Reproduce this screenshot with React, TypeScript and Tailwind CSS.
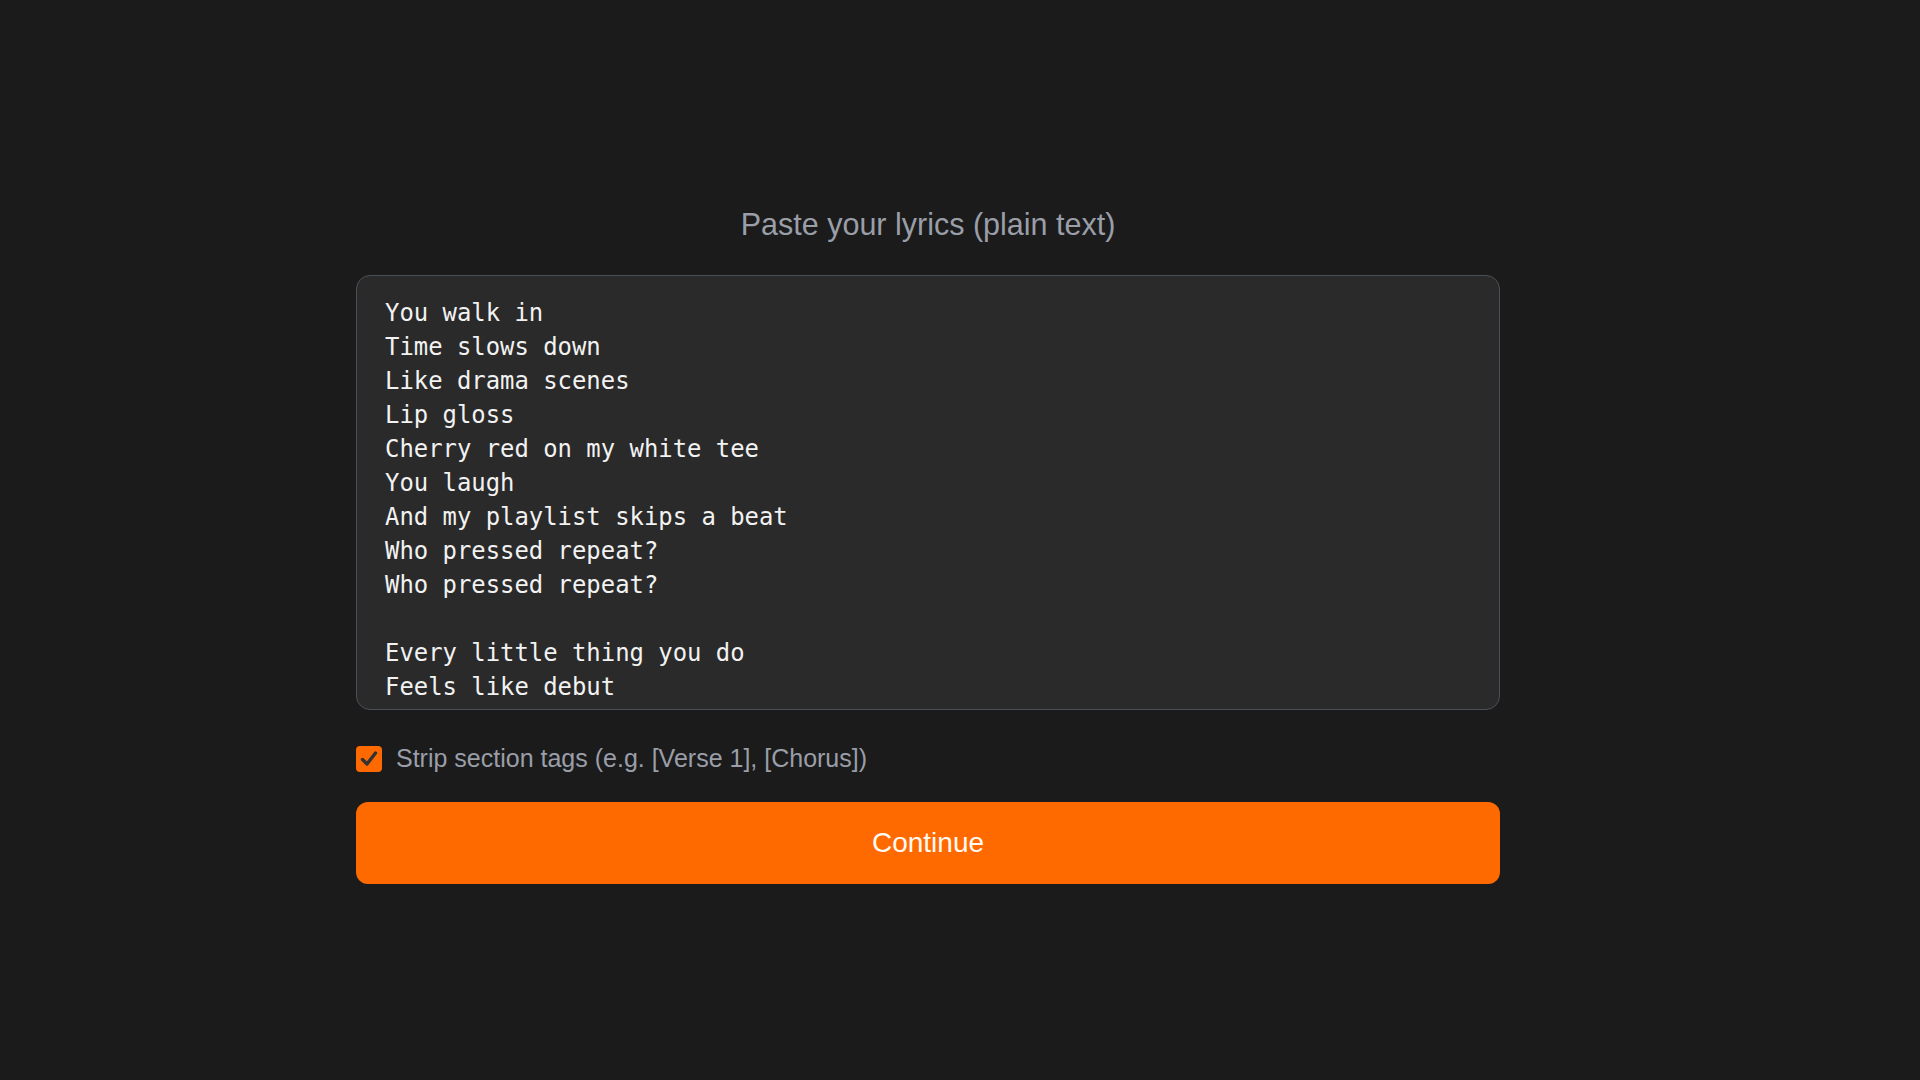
import { useState } from "react";

const lyrics = `You walk in
Time slows down
Like drama scenes
Lip gloss
Cherry red on my white tee
You laugh
And my playlist skips a beat
Who pressed repeat?
Who pressed repeat?

Every little thing you do
Feels like debut
Every time you look at me
It's a brand new scene`;

const App = () => {
    const [text, setText] = useState(lyrics);
    const [strip, setStrip] = useState(true);

    return (
        <div className="min-h-screen w-full bg-[#1b1b1b] pl-[356px] pt-[206px]" style={{ fontFamily: '"Liberation Sans", Arial, sans-serif' }}>
            <div className="flex w-[1144px] flex-col">
                <h1 className="text-center text-[30.5px] leading-[36px] text-[#9a9ea8]">Paste your lyrics (plain text)</h1>

                <textarea
                    value={text}
                    onChange={(e) => setText(e.target.value)}
                    spellCheck={false}
                    className="mt-[33px] h-[435px] w-full resize-none overflow-hidden rounded-[14px] border border-[#4a505a] bg-[#2a2a2a] px-[28px] pt-[20px] text-[23.9px] leading-[34px] text-[#f2f2f2] outline-none"
                    style={{ fontFamily: '"DejaVu Sans Mono", "Liberation Mono", monospace' }}
                />

                {/* strip tags toggle */}
                <label className="mt-[35px] flex h-[28px] cursor-pointer items-center gap-[14px]">
                    <span
                        onClick={() => setStrip(!strip)}
                        className="flex h-[26px] w-[26px] items-center justify-center rounded-[4px] bg-[#ff6a00]"
                    >
                        {strip && (
                            <svg width="20" height="20" viewBox="0 0 20 20" fill="none">
                                <path d="M3.5 10.5 L8 15 L16.5 4" stroke="#333333" strokeWidth="3.4" strokeLinecap="round" strokeLinejoin="round" />
                            </svg>
                        )}
                    </span>
                    <span className="text-[25px] text-[#9a9ea8]">Strip section tags (e.g. [Verse 1], [Chorus])</span>
                </label>

                <button className="mt-[29px] h-[82px] w-full rounded-[12px] bg-[#ff6a00] text-[28px] text-[#fffaf3]">
                    Continue
                </button>
            </div>
        </div>
    );
};

export default App;
